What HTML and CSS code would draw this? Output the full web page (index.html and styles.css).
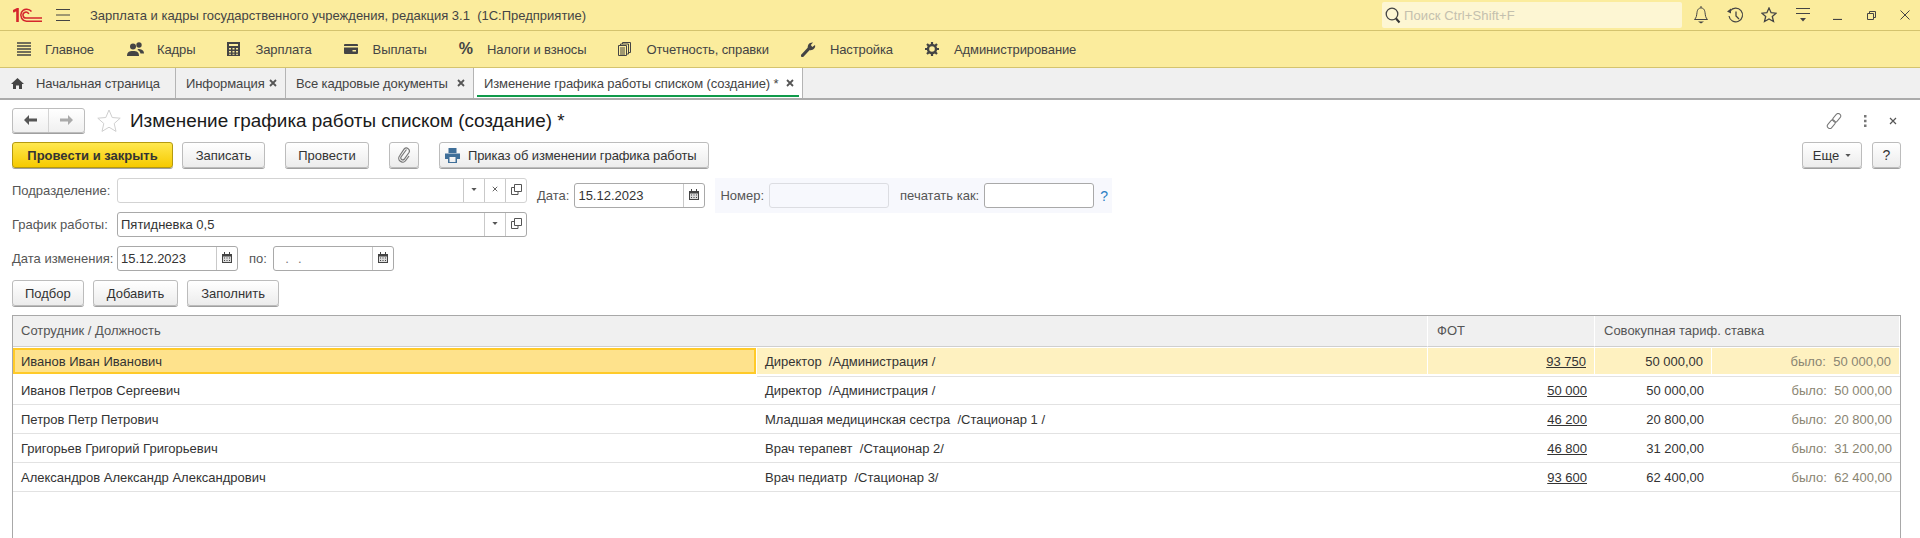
FILE: index.html
```html
<!DOCTYPE html>
<html lang="ru">
<head>
  <meta charset="UTF-8">
  <title>Зарплата и кадры государственного учреждения</title>
  <link rel="stylesheet" href="styles.css">
</head>
<body>
  <svg class="svg-defs" xmlns="http://www.w3.org/2000/svg">
    <symbol id="i-drop" viewBox="0 0 7 4"><path d="M0 0h7L3.500 4z" fill="#555"/></symbol>
    <symbol id="i-open" viewBox="0 0 11 11"><path d="M3.500 .5h7v7h-7z M.5 3.500h3 M.5 3.500v7h6.500v-3" fill="none" stroke="#555"/></symbol>
    <symbol id="i-cal" viewBox="0 0 10 11"><path d="M0 2h10v9H0z" fill="#444"/><path d="M2 0h1v3H2zM7 0h1v3H7z" fill="#444"/><path d="M1 4.500h8v5.500H1z" fill="#ddd"/><path d="M2 5.500h1v1H2zM4.500 5.500h1v1h-1zM7 5.500h1v1H7zM2 8h1v1H2zM4.500 8h1v1h-1zM7 8h1v1H7z" fill="#444"/></symbol>
    <symbol id="i-x" viewBox="0 0 8 8"><path d="M1 1l6 6M7 1L1 7" fill="none" stroke="#555" stroke-width="1.200"/></symbol>
    <symbol id="i-x-bold" viewBox="0 0 8 8"><path d="M1 1l6 6M7 1L1 7" fill="none" stroke="#555" stroke-width="1.800"/></symbol>
  </svg>

  <header class="title-bar">
    <svg class="logo" width="29" height="14" viewBox="0 0 29 14">
      <g fill="none" stroke="#d5252c">
        <path d="M0 3.500L4.500 1.200V14" stroke-width="2.600"/>
        <path d="M18.500 3.500A6 6 0 1 0 13.500 13.200H29" stroke-width="1.500"/>
        <path d="M15.800 6A3 3 0 1 0 13.500 10H29" stroke-width="1.500"/>
      </g>
    </svg>
    <svg class="burger" width="14" height="12" viewBox="0 0 14 12"><path d="M0 .5h14M0 6h14M0 11.500h14" stroke="#444"/></svg>
    <span class="app-name">Зарплата и кадры государственного учреждения, редакция 3.1&nbsp; (1С:Предприятие)</span>
    <div class="search-box">
      <svg width="16" height="17" viewBox="0 0 16 17"><circle cx="7" cy="7" r="5.800" fill="none" stroke="#444" stroke-width="1.300"/><path d="M11 11.500l3.500 4" stroke="#333" stroke-width="2"/></svg>
      <span>Поиск Ctrl+Shift+F</span>
    </div>
    <div class="sys-icons">
      <svg width="16" height="18" viewBox="0 0 16 18"><path d="M1.500 13.500c2-2 2-3.500 2.500-7C4.500 3 6 2 8 2s3.500 1 4 4.500c.5 3.500.5 5 2.500 7z" fill="none" stroke="#444"/><path d="M8 0v2" stroke="#444"/><path d="M5 15.500h6l-3 2z" fill="#444"/></svg>
      <svg width="17" height="17" viewBox="0 0 17 17"><path d="M3.200 4A6.800 6.800 0 1 1 2 9" fill="none" stroke="#444" stroke-width="1.200"/><path d="M0 4.500L4 1.500v5z" fill="#444"/><path d="M9 4.500V9l3 3" fill="none" stroke="#444" stroke-width="1.300"/></svg>
      <svg width="16" height="16" viewBox="0 0 16 16"><path d="M8 1l2.100 4.700 5 .5-3.800 3.300 1.200 5L8 12l-4.500 2.500 1.200-5L.9 6.200l5-.5z" fill="none" stroke="#444" stroke-width="1.300"/></svg>
      <svg width="14" height="14" viewBox="0 0 14 14"><path d="M0 .5h14M0 5.500h14" stroke="#444"/><path d="M4 10h6l-3 3.500z" fill="#444"/></svg>
      <svg class="sys-min" width="9" height="10" viewBox="0 0 9 10"><path d="M0 9.500h9" stroke="#444" stroke-width="1.200"/></svg>
      <svg width="9" height="9" viewBox="0 0 9 9"><path d="M.5 2.500h6v6h-6zM2.500 2.500v-2h6v6h-2" fill="none" stroke="#444"/></svg>
      <svg width="10" height="10" viewBox="0 0 10 10"><path d="M.5.500l9 9M9.500.500l-9 9" stroke="#444"/></svg>
    </div>
  </header>

  <nav class="menu-bar">
    <a class="menu-item"><svg width="14" height="14" viewBox="0 0 14 14"><path d="M0 1h14M0 4h14M0 7h14M0 10h14M0 13h14" stroke="#444" stroke-width="1.600"/></svg>Главное</a>
    <a class="menu-item item-staff"><svg width="17" height="14" viewBox="0 0 17 14"><circle cx="6" cy="4.500" r="3" fill="#444"/><path d="M0 14c0-4 2-5 6-5s6 1 6 5z" fill="#444"/><circle cx="12" cy="3" r="2.700" fill="#444"/><path d="M11 7c3 0 6 1 6 4.500h-3.500c-.5-2-1.500-3-3-3.500z" fill="#444"/></svg>Кадры</a>
    <a class="menu-item"><svg width="13" height="14" viewBox="0 0 13 14"><path fill-rule="evenodd" d="M0 0h13v14H0zM2 2v2h9V2zM2 6v1.500h2V6zM5.500 6v1.500h2V6zM9 6v1.500h2V6zM2 9v1.500h2V9zM5.500 9v1.500h2V9zM9 9v1.500h2V9zM2 11.800v1h2v-1zM5.500 11.800v1h2v-1zM9 11.800v1h2v-1z" fill="#444"/></svg>Зарплата</a>
    <a class="menu-item"><svg width="14" height="10" viewBox="0 0 14 10"><path d="M1 0h12a1 1 0 0 1 1 1v1H0V1a1 1 0 0 1 1-1z" fill="#444"/><path fill-rule="evenodd" d="M0 3.500h14V9a1 1 0 0 1-1 1H1a1 1 0 0 1-1-1zM8.500 6v1.500h3.500V6z" fill="#444"/></svg>Выплаты</a>
    <a class="menu-item"><span class="percent-sign">%</span>Налоги и взносы</a>
    <a class="menu-item"><svg width="13" height="14" viewBox="0 0 13 14"><path d="M.5 3.500h8v10h-8zM2.500 3.500V2h8v10H8.500M4.500 2V.5h8v10h-2" fill="none" stroke="#444"/><path d="M2 6h5M2 8h5M2 10h5M2 12h5" stroke="#444"/></svg>Отчетность, справки</a>
    <a class="menu-item item-setup"><svg width="16" height="16" viewBox="0 0 16 16"><path d="M1.500 14.500l7-7.500" stroke="#444" stroke-width="3.200" stroke-linecap="round"/><path d="M7 7.500C6 4 8.500 1 12 1.500L9.800 4l1.500 2L14 4c1 3-2.500 6-5.500 5z" fill="#444"/></svg>Настройка</a>
    <a class="menu-item"><svg width="14" height="14" viewBox="0 0 14 14"><circle cx="7" cy="7" r="4" fill="none" stroke="#444" stroke-width="2.400"/><path d="M7 0v3M7 11v3M0 7h3M11 7h3M2 2l2 2M10 10l2 2M12 2l-2 2M4 10l-2 2" stroke="#444" stroke-width="2.200"/></svg>Администрирование</a>
  </nav>

  <div class="tab-bar">
    <div class="tab tab-home"><svg width="13" height="11" viewBox="0 0 13 11"><path d="M6.500 0L13 6h-2v5H8V7.500H5V11H2V6H0z" fill="#444"/></svg>Начальная страница</div>
    <div class="tab tab-info">Информация<svg class="tab-close" width="8" height="8"><use href="#i-x-bold"/></svg></div>
    <div class="tab tab-docs">Все кадровые документы<svg class="tab-close" width="8" height="8"><use href="#i-x-bold"/></svg></div>
    <div class="tab tab-active">Изменение графика работы списком (создание) *<svg class="tab-close" width="8" height="8"><use href="#i-x-bold"/></svg></div>
  </div>

  <main class="form">
    <div class="form-head">
      <div class="nav-group">
        <button class="nav-btn"><svg width="13" height="10" viewBox="0 0 13 10"><path d="M5 0v3.500h8v3H5V10L0 5z" fill="#555"/></svg></button>
        <button class="nav-btn"><svg width="13" height="10" viewBox="0 0 13 10"><path d="M8 0v3.500H0v3h8V10l5-5z" fill="#aaa"/></svg></button>
      </div>
      <svg class="fav-star" width="24" height="23" viewBox="0 0 24 23"><path d="M12 1l3.200 7.500 8 .7-6 5.300 1.800 7.900L12 18.200 5 22.400l1.800-7.900-6-5.300 8-.7z" fill="none" stroke="#cfcfcf"/></svg>
      <h1>Изменение графика работы списком (создание) *</h1>
      <div class="head-tools">
        <svg width="16" height="16" viewBox="0 0 16 16"><g fill="none" stroke="#777" transform="rotate(40 8 8)"><rect x="5.500" y="-1" width="5" height="9.500" rx="2.500"/><rect x="5.500" y="7.500" width="5" height="9.500" rx="2.500"/></g></svg>
        <svg width="3" height="12" viewBox="0 0 3 12"><path d="M0 0h2.500v2.500H0zM0 4.700h2.500v2.500H0zM0 9.400h2.500v2.500H0z" fill="#777"/></svg>
        <svg width="8" height="8"><use href="#i-x"/></svg>
      </div>
    </div>

    <div class="actions">
      <button class="btn btn-primary">Провести и закрыть</button>
      <button class="btn btn-save">Записать</button>
      <button class="btn btn-post">Провести</button>
      <button class="btn btn-clip"><svg width="13" height="16" viewBox="0 0 13 16"><path d="M8.500 2.500L3 10a2 2 0 0 0 3.200 2.300L11 5.500A3 3 0 0 0 6.200 2L1.500 9a3.800 3.800 0 0 0 6.200 4.500L11 9" fill="none" stroke="#777" stroke-width="1.200"/></svg></button>
      <button class="btn btn-order"><svg width="15" height="15" viewBox="0 0 15 15"><path fill-rule="evenodd" d="M3.500 0h8v5h-8zM0 5.500h15V11h-3v4H3v-4H0zM4.500 9v5h6V9z" fill="#3f6f99"/></svg>Приказ об изменении графика работы</button>
      <div class="actions-right">
        <button class="btn btn-more">Еще<svg width="6" height="3"><use href="#i-drop"/></svg></button>
        <button class="btn btn-help">?</button>
      </div>
    </div>

    <div class="fields-top">
      <div class="fields-left">
        <div class="field-row">
          <label>Подразделение:</label>
          <div class="input input-empty input-wide">
            <span class="input-value"></span>
            <span class="input-btn"><svg width="6" height="3"><use href="#i-drop"/></svg></span>
            <span class="input-btn"><svg width="6" height="6"><use href="#i-x"/></svg></span>
            <span class="input-btn"><svg width="11" height="11"><use href="#i-open"/></svg></span>
          </div>
        </div>
        <div class="field-row">
          <label>График работы:</label>
          <div class="input input-wide">
            <span class="input-value">Пятидневка 0,5</span>
            <span class="input-btn"><svg width="6" height="3"><use href="#i-drop"/></svg></span>
            <span class="input-btn"><svg width="11" height="11"><use href="#i-open"/></svg></span>
          </div>
        </div>
      </div>
      <div class="date-field">
        <label>Дата:</label>
        <div class="input input-date">
          <span class="input-value">15.12.2023</span>
          <span class="input-btn"><svg width="10" height="11"><use href="#i-cal"/></svg></span>
        </div>
      </div>
      <div class="number-panel">
        <label>Номер:</label>
        <div class="input input-disabled"></div>
        <label class="print-label">печатать как:</label>
        <div class="input input-print"></div>
        <span class="hint">?</span>
      </div>
    </div>

    <div class="field-row row-change">
      <label>Дата изменения:</label>
      <div class="input input-date">
        <span class="input-value">15.12.2023</span>
        <span class="input-btn"><svg width="10" height="11"><use href="#i-cal"/></svg></span>
      </div>
      <label class="to-label">по:</label>
      <div class="input input-date">
        <span class="input-value date-blank">&nbsp;&nbsp;.&nbsp;&nbsp;.</span>
        <span class="input-btn"><svg width="10" height="11"><use href="#i-cal"/></svg></span>
      </div>
    </div>

    <div class="table-actions">
      <button class="btn">Подбор</button>
      <button class="btn">Добавить</button>
      <button class="btn">Заполнить</button>
    </div>

    <div class="grid-wrap">
      <table class="grid">
        <colgroup>
          <col class="col-name"><col class="col-pos"><col class="col-fot"><col class="col-rate"><col class="col-old">
        </colgroup>
        <thead>
          <tr><th colspan="2">Сотрудник / Должность</th><th>ФОТ</th><th colspan="2">Совокупная тариф. ставка</th></tr>
        </thead>
        <tbody>
          <tr class="selected">
            <td class="cell-current">Иванов Иван Иванович</td><td>Директор&nbsp; /Администрация /</td>
            <td class="num"><a>93 750</a></td><td class="num">50 000,00</td><td class="num old">было:&nbsp; 50 000,00</td>
          </tr>
          <tr>
            <td>Иванов Петров Сергеевич</td><td>Директор&nbsp; /Администрация /</td>
            <td class="num"><a>50 000</a></td><td class="num">50 000,00</td><td class="num old">было:&nbsp; 50 000,00</td>
          </tr>
          <tr>
            <td>Петров Петр Петрович</td><td>Младшая медицинская сестра&nbsp; /Стационар 1 /</td>
            <td class="num"><a>46 200</a></td><td class="num">20 800,00</td><td class="num old">было:&nbsp; 20 800,00</td>
          </tr>
          <tr>
            <td>Григорьев Григорий Григорьевич</td><td>Врач терапевт&nbsp; /Стационар 2/</td>
            <td class="num"><a>46 800</a></td><td class="num">31 200,00</td><td class="num old">было:&nbsp; 31 200,00</td>
          </tr>
          <tr>
            <td>Александров Александр Александрович</td><td>Врач педиатр&nbsp; /Стационар 3/</td>
            <td class="num"><a>93 600</a></td><td class="num">62 400,00</td><td class="num old">было:&nbsp; 62 400,00</td>
          </tr>
        </tbody>
      </table>
    </div>
  </main>
</body>
</html>
```

FILE: styles.css
```css
* {
  box-sizing: border-box;
}

html, body {
  height: 100%;
}

body {
  margin: 0;
  display: flex;
  flex-direction: column;
  overflow: hidden;
  background-color: #fff;
  color: #333;
  font-family: "Liberation Sans", Arial, sans-serif;
  font-size: 13px;
}

.svg-defs {
  display: none;
}

button {
  font-family: inherit;
  font-size: 13px;
  color: #333;
}

/* title bar */
.title-bar {
  flex: none;
  display: flex;
  align-items: center;
  height: 31px;
  padding-left: 13px;
  background-color: #fbec9d;
  border-bottom: 1px solid #d4c36e;
}

.logo {
  margin-right: 14px;
}

.burger {
  margin-right: 20px;
}

.app-name {
  color: #444;
}

.search-box {
  display: flex;
  align-items: center;
  gap: 3px;
  width: 300px;
  height: 26px;
  margin-left: auto;
  margin-right: 2px;
  padding-left: 3px;
  background-color: #fdf6d3;
  border-radius: 2px;
  color: #c4c0ae;
  letter-spacing: .1px;
}

.sys-icons {
  display: grid;
  grid-template-columns: repeat(7, 34px);
  justify-items: center;
  align-items: center;
  margin-right: -2px;
}

/* section menu */
.menu-bar {
  flex: none;
  display: flex;
  align-items: center;
  height: 37px;
  padding-left: 17px;
  background-color: #fbec9d;
  border-bottom: 1px solid #d4c36e;
  letter-spacing: -.1px;
}

.menu-item {
  display: flex;
  align-items: center;
  margin-right: 32px;
  color: #444;
}

.menu-item svg {
  margin-right: 15px;
}

.menu-item:first-child {
  margin-right: 33px;
}

.menu-item:first-child svg {
  margin-right: 14px;
}

.item-staff svg {
  margin-right: 13px;
}

.item-setup svg {
  margin-right: 13px;
}

.percent-sign {
  margin-right: 14px;
  font-size: 16px;
  font-weight: bold;
  color: #444;
}

/* open tabs */
.tab-bar {
  flex: none;
  display: flex;
  height: 32px;
  background-color: #f0f0f0;
  border-bottom: 2px solid #ababab;
  letter-spacing: -.1px;
}

.tab {
  position: relative;
  display: flex;
  align-items: center;
  justify-content: space-between;
  padding: 0 8px 0 10px;
  border-right: 1px solid #b4b4b4;
  color: #444;
}

.tab-home {
  width: 176px;
  justify-content: flex-start;
  padding-left: 11px;
}

.tab-home svg {
  margin-right: 12px;
}

.tab-info {
  width: 110px;
}

.tab-docs {
  width: 188px;
}

.tab-active {
  width: 329px;
  background-color: #fff;
}

/* green line under the current tab */
.tab-active::after {
  content: "";
  position: absolute;
  left: 3px;
  right: 3px;
  bottom: 1px;
  height: 2px;
  background-color: #0f9a4a;
}

/* form */
.form {
  flex: 1;
  min-height: 0;
  display: flex;
  flex-direction: column;
  padding: 8px 19px 0 12px;
}

.form-head {
  display: flex;
  align-items: center;
  height: 25px;
}

.nav-group {
  display: flex;
  width: 73px;
  height: 25px;
  border: 1px solid #bdbdbd;
  border-radius: 3px;
  box-shadow: 0 1px 0 #a0a0a0;
  background: linear-gradient(#fff, #f0f0f0);
}

.nav-btn {
  flex: 1;
  padding: 0;
  border: none;
  background: none;
}

.nav-btn + .nav-btn {
  border-left: 1px solid #d4d4d4;
}

.fav-star {
  margin: 0 9px 0 12px;
}

h1 {
  margin: 0;
  font-size: 18.900px;
  font-weight: normal;
  color: #1a1a1a;
}

.head-tools {
  display: flex;
  align-items: center;
  gap: 22px;
  margin-left: auto;
  margin-right: 4px;
}

.actions {
  display: flex;
  margin-top: 9px;
}

.btn {
  height: 26px;
  padding: 0 12px;
  border: 1px solid #bcbcbc;
  border-radius: 3px;
  background: linear-gradient(#fff, #ececec);
  box-shadow: 0 1px 0 #9f9f9f;
  white-space: nowrap;
}

.btn-primary {
  width: 161px;
  padding: 0;
  border-color: #b59a10;
  background: linear-gradient(#ffe84f, #f6ca00);
  font-weight: bold;
}

.btn-save {
  width: 83px;
  margin-left: 9px;
}

.btn-post {
  width: 84px;
  margin-left: 20px;
}

.btn-clip {
  display: flex;
  align-items: center;
  justify-content: center;
  width: 30px;
  margin-left: 20px;
  padding: 0;
}

.btn-order {
  display: flex;
  align-items: center;
  gap: 8px;
  width: 270px;
  margin-left: 20px;
  padding: 0 0 0 5px;
  letter-spacing: -.1px;
}

.actions-right {
  display: flex;
  gap: 10px;
  margin-left: auto;
}

.btn-more {
  display: flex;
  align-items: center;
  justify-content: center;
  gap: 6px;
  width: 60px;
  padding: 0;
}

.btn-help {
  width: 29px;
  padding: 0;
  font-size: 14px;
}

/* fields */
.fields-top {
  display: flex;
  align-items: flex-start;
  margin-top: 10px;
}

.fields-left {
  display: flex;
  flex-direction: column;
  gap: 9px;
  margin-right: 10px;
}

.field-row {
  display: flex;
  align-items: center;
}

.field-row > label:first-child {
  width: 105px;
}

label {
  color: #555;
}

.input {
  display: flex;
  height: 25px;
  border: 1px solid #a9a9a9;
  border-radius: 3px;
  background-color: #fff;
}

.input-empty {
  border-color: #d3d3d3;
}

.input-empty .input-btn:first-of-type {
  border-left-color: #a9a9a9;
}

.input-wide {
  width: 410px;
}

.input-value {
  flex: 1;
  min-width: 0;
  padding-left: 3px;
  line-height: 23px;
  color: #333;
}

.input-btn {
  flex: none;
  display: flex;
  align-items: center;
  justify-content: center;
  width: 21px;
  padding-bottom: 3px;
  border-left: 1px solid #c9c9c9;
}

.input-date {
  width: 121px;
}

.date-blank {
  letter-spacing: .6px;
  color: #777;
}

.date-field {
  display: flex;
  align-items: center;
  gap: 5px;
  margin-top: 5px;
}

.date-field .input-date {
  width: 131px;
}

.number-panel {
  display: flex;
  align-items: center;
  width: 397px;
  height: 35px;
  margin-left: 10px;
  padding-left: 5px;
  background-color: #f7f8fd;
}

.number-panel label {
  white-space: nowrap;
}

.input-disabled {
  width: 120px;
  margin-left: 5px;
  border-color: #dcdde2;
  background-color: #f7f8fd;
}

.print-label {
  margin-left: 11px;
}

.input-print {
  width: 110px;
  margin-left: 5px;
}

.hint {
  margin-left: 6px;
  font-size: 14px;
  color: #2b7fc3;
}

.row-change {
  margin-top: 9px;
}

.to-label {
  margin: 0 6px 0 11px;
}

.table-actions {
  display: flex;
  gap: 9px;
  margin-top: 9px;
}

.table-actions .btn + .btn {
  padding: 0 13px;
}

/* table */
.grid-wrap {
  flex: 1;
  min-height: 0;
  margin-top: 9px;
  border: 1px solid #a8a8a8;
  border-bottom: none;
}

.grid {
  width: 100%;
  table-layout: fixed;
  border-collapse: separate;
  border-spacing: 0;
}

.col-name {
  width: 744px;
}

.col-pos {
  width: 671px;
}

.col-fot {
  width: 167px;
}

.col-rate {
  width: 117px;
}

th {
  height: 31px;
  padding: 0 0 2px 9px;
  background-color: #f0f0f0;
  border-right: 1px solid #fff;
  border-bottom: 1px solid #cfcfcf;
  font-weight: normal;
  text-align: left;
  color: #555;
}

th:first-child {
  padding-left: 8px;
}

td {
  height: 29px;
  padding: 0 8px;
  border-bottom: 1px solid #e2e2e2;
  white-space: nowrap;
  color: #333;
}

.num {
  text-align: right;
}

td a {
  text-decoration: underline;
}

.old {
  color: #8a8572;
}

.selected td {
  background-color: #fef1c0;
  border-top: 1px solid #fff;
  border-right: 1px solid #fff;
  border-bottom: 2px solid #fff;
  box-shadow: 0 1px 0 #e2e2e2;
}

.selected .cell-current {
  background-color: #fee28c;
  box-shadow: inset 0 0 0 2px #ffca28;
}
```
